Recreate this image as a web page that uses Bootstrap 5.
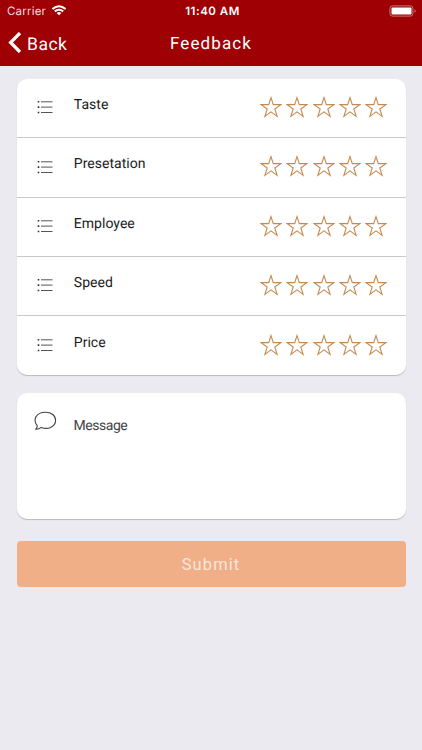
<!DOCTYPE html>
<html lang="en">
<head>
<meta charset="utf-8">
<meta name="viewport" content="width=device-width, initial-scale=1">
<title>Feedback</title>
<link href="https://cdn.jsdelivr.net/npm/bootstrap@5.3.0/dist/css/bootstrap.min.css" rel="stylesheet">
<style>
body{background:#ebeaf1;font-family:Roboto,"Liberation Sans",sans-serif;height:750px;overflow:hidden;color:#1c1c1c;text-rendering:geometricPrecision}
svg{display:block;flex:none}
.top-area{background:#9e0003;height:65.5px;color:#fff}
.status-row{height:22px;font:12px/22px Inter,sans-serif;padding:0 5px 0 7px}
.status-row>div{flex:1 1 0}
.carrier{font-size:11.5px;letter-spacing:.2px;color:#f6dfe0}
.wifi{margin:0 0 2px 5px}
.clock{font-size:11.5px;font-weight:600;letter-spacing:.5px;padding-left:1px}
.title-row{height:42px;padding:0 8px}
.title-row>div{flex:1 1 0}
.back-label{font-size:17.5px;letter-spacing:.5px;line-height:22px;padding:3px 0 0 5px}
.page-title{font-size:17px;letter-spacing:1.1px;line-height:22px;padding-top:2px}
.page-body{padding:13.5px 16.5px 0}
.panel{background:#fff;border-radius:10px;box-shadow:0 1px 1px #b9b8be}
.rate-row{height:59.3px;padding:0 18.2px 0 20.5px}
.rate-row:not(:last-child){border-bottom:1.2px solid #c9c9cb}
.rate-row .list-ico{margin-top:-1.5px}
.row-label{font-size:14px;line-height:18px;letter-spacing:.03px;margin-left:20.8px;margin-top:-6px}
.stars{gap:4.4px;margin-top:-2px}
.message-panel{height:125.5px;margin-top:18px;padding:18px 17px;color:#444}
.message-panel .row-label{margin:6px 0 0 17px;letter-spacing:-.45px}
.submit-btn,.submit-btn:hover{height:45.5px;margin-top:22.5px;background:#f0af87;color:#f6e5df;border:0;border-radius:4px;font-size:16.5px;letter-spacing:1.1px;line-height:22px;padding-top:8px}
</style>
</head>
<body>
<svg width="0" height="0" class="position-absolute" aria-hidden="true">
<symbol id="star" viewBox="0 0 22 22"><path d="M11 1.6 13.3 8.6H20.9L14.8 13 17.1 20.4 11 15.9 4.9 20.4 7.2 13 1.1 8.6H8.7Z" fill="none" stroke="#c58a4f" stroke-width="1.1"/></symbol>
<symbol id="list" viewBox="0 0 16 14"><path d="M4 1.8H15.5M4 7.1H15.5M4 12.5H15.5" stroke="#555" stroke-width="1"/><path d="M.7 1H2.3V2.6H.7ZM.7 6.3H2.3V7.9H.7ZM.7 11.7H2.3V13.3H.7Z" fill="#333"/></symbol>
</svg>
<header class="top-area">
  <div class="status-row d-flex">
    <div class="carrier d-flex align-items-center"><span>Carrier</span>
      <svg class="wifi" width="16" height="12" viewBox="0 0 16 12" fill="none" stroke="#fff" stroke-width="2"><path d="M1.4 5Q8-.6 14.6 5M3.8 7.4Q8 4 12.2 7.4"/><path d="M5.6 8.9Q8 7.1 10.4 8.9L8 11.3Z" fill="#fff" stroke="none"/></svg>
    </div>
    <div class="clock text-center text-nowrap">11:40 AM</div>
    <div class="d-flex justify-content-end align-items-center">
      <svg width="28" height="12" viewBox="0 0 28 12"><rect x=".9" y=".9" width="23" height="10.2" rx="2.5" fill="none" stroke="#cd7476"/><rect x="2.5" y="2.4" width="20" height="7.2" rx="1" fill="#fff"/><path d="M25.5 4.2Q28 6 25.5 7.8Z" fill="#cd7476"/></svg>
    </div>
  </div>
  <div class="title-row d-flex align-items-center">
    <div class="d-flex align-items-center"><svg width="14" height="22" viewBox="0 0 14 22"><path d="M12 1 2.6 10.5 12 20" fill="none" stroke="#fff" stroke-width="3.2"/></svg><span class="back-label">Back</span></div>
    <div class="page-title text-center">Feedback</div>
    <div></div>
  </div>
</header>
<main class="page-body">
  <section class="panel">
    <div class="rate-row d-flex align-items-center"><svg class="list-ico" width="16" height="14"><use href="#list"/></svg><span class="row-label">Taste</span><div class="stars d-flex ms-auto"><svg width="22" height="22"><use href="#star"/></svg><svg width="22" height="22"><use href="#star"/></svg><svg width="22" height="22"><use href="#star"/></svg><svg width="22" height="22"><use href="#star"/></svg><svg width="22" height="22"><use href="#star"/></svg></div></div>
    <div class="rate-row d-flex align-items-center"><svg class="list-ico" width="16" height="14"><use href="#list"/></svg><span class="row-label">Presetation</span><div class="stars d-flex ms-auto"><svg width="22" height="22"><use href="#star"/></svg><svg width="22" height="22"><use href="#star"/></svg><svg width="22" height="22"><use href="#star"/></svg><svg width="22" height="22"><use href="#star"/></svg><svg width="22" height="22"><use href="#star"/></svg></div></div>
    <div class="rate-row d-flex align-items-center"><svg class="list-ico" width="16" height="14"><use href="#list"/></svg><span class="row-label">Employee</span><div class="stars d-flex ms-auto"><svg width="22" height="22"><use href="#star"/></svg><svg width="22" height="22"><use href="#star"/></svg><svg width="22" height="22"><use href="#star"/></svg><svg width="22" height="22"><use href="#star"/></svg><svg width="22" height="22"><use href="#star"/></svg></div></div>
    <div class="rate-row d-flex align-items-center"><svg class="list-ico" width="16" height="14"><use href="#list"/></svg><span class="row-label">Speed</span><div class="stars d-flex ms-auto"><svg width="22" height="22"><use href="#star"/></svg><svg width="22" height="22"><use href="#star"/></svg><svg width="22" height="22"><use href="#star"/></svg><svg width="22" height="22"><use href="#star"/></svg><svg width="22" height="22"><use href="#star"/></svg></div></div>
    <div class="rate-row d-flex align-items-center"><svg class="list-ico" width="16" height="14"><use href="#list"/></svg><span class="row-label">Price</span><div class="stars d-flex ms-auto"><svg width="22" height="22"><use href="#star"/></svg><svg width="22" height="22"><use href="#star"/></svg><svg width="22" height="22"><use href="#star"/></svg><svg width="22" height="22"><use href="#star"/></svg><svg width="22" height="22"><use href="#star"/></svg></div></div>
  </section>
  <section class="panel message-panel d-flex align-items-start">
    <svg width="23" height="20" viewBox="0 0 23 20"><path d="M3.2 14.6C-1.8 8.5 2.5 1.2 11.3 1.2C17.3 1.2 21.6 4.6 21.6 9.2C21.6 15.3 14.4 19.2 7.2 16.4C5.6 17.7 3.7 18.4 1.6 18.2C2.8 17.2 3.4 16 3.2 14.6Z" fill="none" stroke="#444" stroke-width="1.1" stroke-linejoin="round"/></svg>
    <span class="row-label">Message</span>
  </section>
  <button type="button" class="btn submit-btn w-100 d-flex align-items-center justify-content-center">Submit</button>
</main>
<script src="https://cdn.jsdelivr.net/npm/bootstrap@5.3.0/dist/js/bootstrap.bundle.min.js"></script>
</body>
</html>
